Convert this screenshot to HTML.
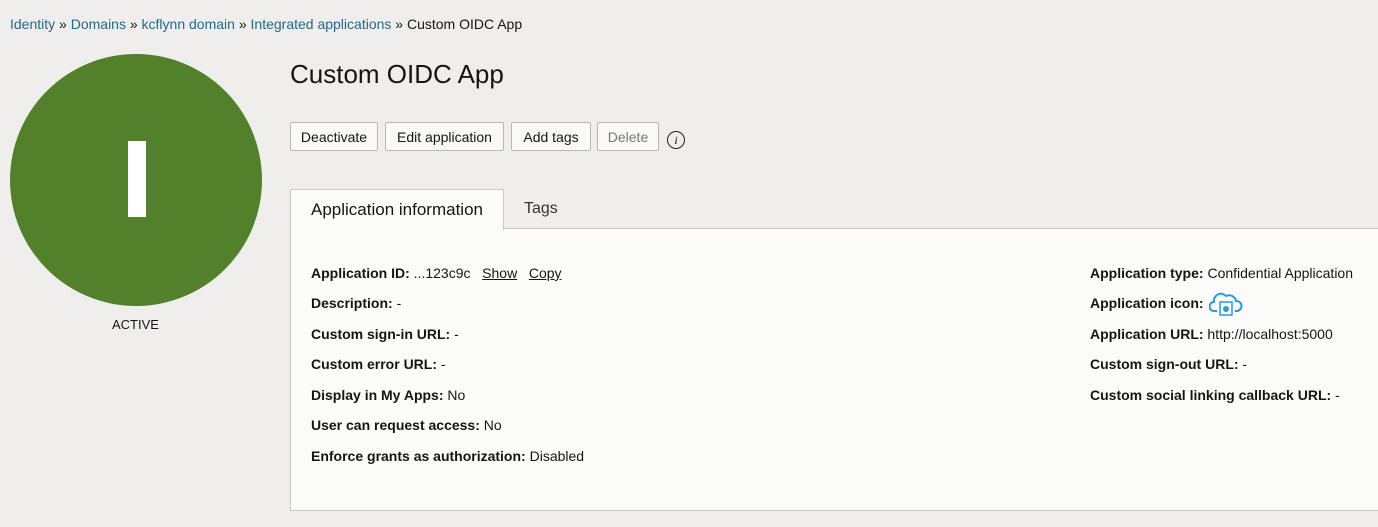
<!DOCTYPE html>
<html><head><meta charset="utf-8"><style>
body{margin:0;width:1378px;height:527px;overflow:hidden;background:#efeeec;font-family:"Liberation Sans",Arial,sans-serif;color:#161513;position:relative}
.a{position:absolute;white-space:nowrap}
.bc{top:16px;left:10px;font-size:14px;color:#161513}
.bc a{color:#1f6a8a;text-decoration:none}
.circ{left:10px;top:54px;width:252px;height:252px;border-radius:50%;background:#52802b}
.bar{left:128px;top:141px;width:18px;height:76px;background:#fff}
h1{position:absolute;left:290px;top:59px;margin:0;font-size:26px;font-weight:normal}
.btn{position:absolute;top:122px;height:29px;border:1px solid #b9b8b5;border-radius:2px;background:#f9f9f8;font-size:14px;line-height:29px;text-align:center;box-sizing:border-box}
.panel{left:290px;top:228px;width:1100px;height:283px;background:#fbfbfa;border:1px solid #c9c8c5;box-sizing:border-box}
.tab{left:290px;top:189px;width:214px;height:41px;background:#fbfbfa;border:1px solid #c9c8c5;border-bottom:none;box-sizing:border-box;font-size:17px;line-height:40px;text-align:center}
.r{font-size:14px}
.r b{font-weight:bold}
u{color:#161513}
</style></head><body>
<div class="a bc"><a>Identity</a> » <a>Domains</a> » <a>kcflynn domain</a> » <a>Integrated applications</a> » Custom OIDC App</div>
<div class="a circ"></div><div class="a bar"></div>
<div class="a" style="left:112px;top:317px;font-size:13px">ACTIVE</div>
<h1>Custom OIDC App</h1>
<div class="btn" style="left:290px;width:88px">Deactivate</div>
<div class="btn" style="left:385px;width:119px">Edit application</div>
<div class="btn" style="left:511px;width:80px">Add tags</div>
<div class="btn" style="left:597px;width:62px;color:#777">Delete</div>
<div class="a" style="left:667px;top:131px;width:18px;height:18px;border:1.3px solid #222;border-radius:50%;box-sizing:border-box;font:italic 12px 'Liberation Serif',serif;text-align:center;line-height:16px">i</div>
<div class="a panel"></div>
<div class="a tab">Application information</div>
<div class="a" style="left:524px;top:200px;font-size:16px;color:#333">Tags</div>
<div class="a r" style="left:311px;top:265px"><b>Application ID:</b> ...123c9c &nbsp;&nbsp;<u>Show</u> &nbsp;&nbsp;<u>Copy</u></div>
<div class="a r" style="left:311px;top:295px"><b>Description:</b> -</div>
<div class="a r" style="left:311px;top:326px"><b>Custom sign-in URL:</b> -</div>
<div class="a r" style="left:311px;top:356px"><b>Custom error URL:</b> -</div>
<div class="a r" style="left:311px;top:387px"><b>Display in My Apps:</b> No</div>
<div class="a r" style="left:311px;top:417px"><b>User can request access:</b> No</div>
<div class="a r" style="left:311px;top:448px"><b>Enforce grants as authorization:</b> Disabled</div>
<div class="a r" style="left:1090px;top:265px"><b>Application type:</b> Confidential Application</div>
<div class="a r" style="left:1090px;top:295px"><b>Application icon:</b></div>
<svg class="a" style="left:1209px;top:291px" width="34" height="26" viewBox="0 0 34 26"><path d="M8 20 H5 A4.5 4.5 0 0 1 5 11 A7 7 0 0 1 17 5 A7 7 0 0 1 27 10 A5 5 0 0 1 28 20 H26" fill="none" stroke="#2a9ad6" stroke-width="2"/><rect x="11" y="11" width="12" height="13" fill="#fff" stroke="#2a9ad6" stroke-width="1.5"/><circle cx="17" cy="18" r="3" fill="#2a9ad6"/></svg>
<div class="a r" style="left:1090px;top:326px"><b>Application URL:</b> http://localhost:5000</div>
<div class="a r" style="left:1090px;top:356px"><b>Custom sign-out URL:</b> -</div>
<div class="a r" style="left:1090px;top:387px"><b>Custom social linking callback URL:</b> -</div>
</body></html>
